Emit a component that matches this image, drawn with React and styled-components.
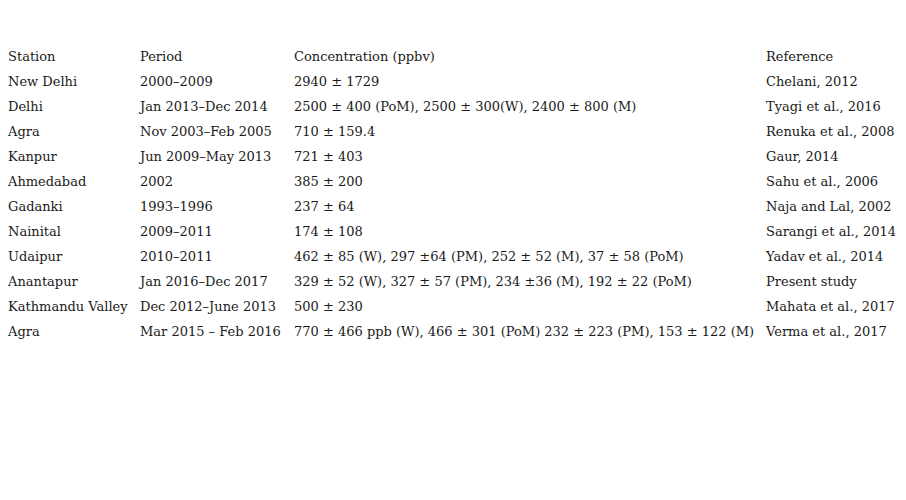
import styled, { createGlobalStyle } from "styled-components";

const GlobalStyle = createGlobalStyle`
  body {
    margin: 0;
    background: #ffffff;
  }
`;

const Page = styled.div`
  padding: 44px 0 0 8px;
  font-family: "DejaVu Serif", "Liberation Serif", serif;
  font-size: 13px;
  color: #1a1a1a;
`;

const Table = styled.div`
  display: grid;
  grid-template-columns: 132px 154px 472px auto;
  grid-auto-rows: 25px;
  align-items: center;
`;

const Cell = styled.div`
  white-space: nowrap;
`;

const rows = [
  ["Station", "Period", "Concentration (ppbv)", "Reference"],
  ["New Delhi", "2000–2009", "2940 ± 1729", "Chelani, 2012"],
  ["Delhi", "Jan 2013–Dec 2014", "2500 ± 400 (PoM), 2500 ± 300(W), 2400 ± 800 (M)", "Tyagi et al., 2016"],
  ["Agra", "Nov 2003–Feb 2005", "710 ± 159.4", "Renuka et al., 2008"],
  ["Kanpur", "Jun 2009–May 2013", "721 ± 403", "Gaur, 2014"],
  ["Ahmedabad", "2002", "385 ± 200", "Sahu et al., 2006"],
  ["Gadanki", "1993–1996", "237 ± 64", "Naja and Lal, 2002"],
  ["Nainital", "2009–2011", "174 ± 108", "Sarangi et al., 2014"],
  ["Udaipur", "2010–2011", "462 ± 85 (W), 297 ±64 (PM), 252 ± 52 (M), 37 ± 58 (PoM)", "Yadav et al., 2014"],
  ["Anantapur", "Jan 2016–Dec 2017", "329 ± 52 (W), 327 ± 57 (PM), 234 ±36 (M), 192 ± 22 (PoM)", "Present study"],
  ["Kathmandu Valley", "Dec 2012–June 2013", "500 ± 230", "Mahata et al., 2017"],
  ["Agra", "Mar 2015 – Feb 2016", "770 ± 466 ppb (W), 466 ± 301 (PoM) 232 ± 223 (PM), 153 ± 122 (M)", "Verma et al., 2017"],
];

export default function App() {
  return (
    <>
      <GlobalStyle />
      <Page>
        <Table>
          {rows.map((row, i) =>
            row.map((text, j) => <Cell key={i + "-" + j}>{text}</Cell>)
          )}
        </Table>
      </Page>
    </>
  );
}
